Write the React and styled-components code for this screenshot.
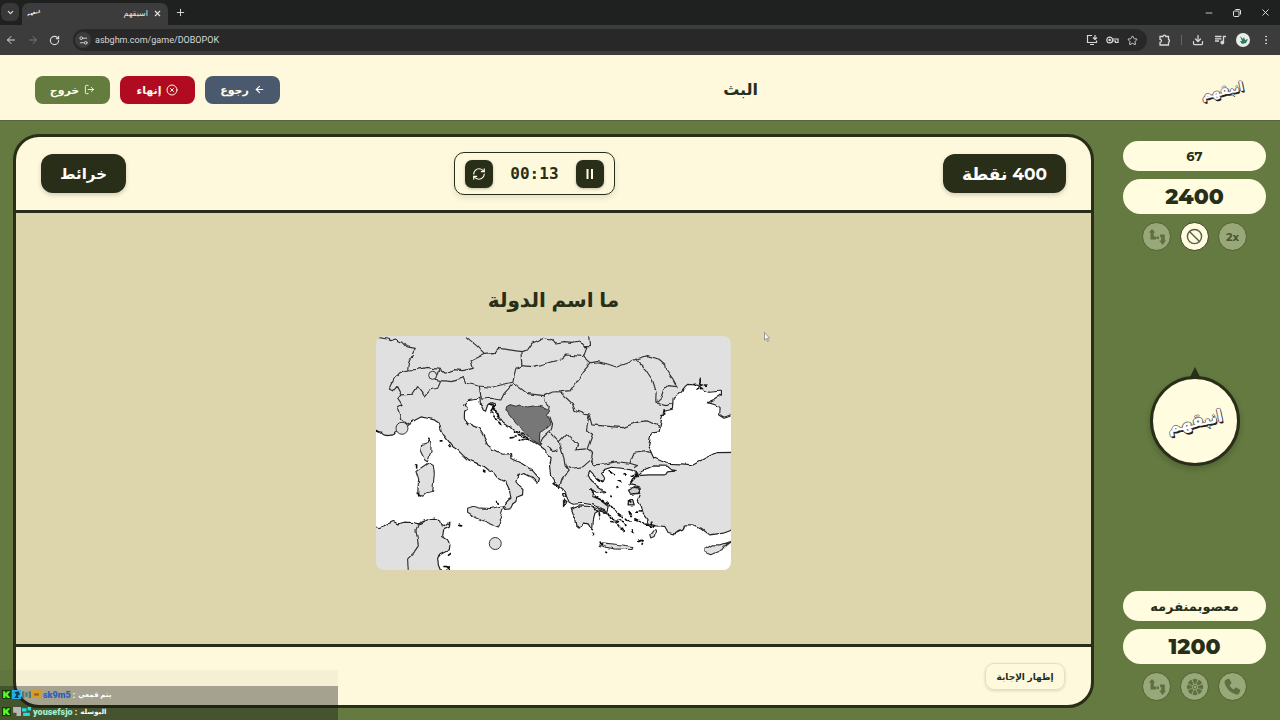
import React from 'react';
import styled, { createGlobalStyle, css } from 'styled-components';
import {
  ChevronDown, X, Plus, ArrowLeft, ArrowRight, RotateCw, Settings2, Star,
  Download, EllipsisVertical, Minus, LogOut, CircleX, RefreshCw, Ban,
} from 'lucide-react';

const ink = '#282e18';
const cream = '#fef9dc';
const green = '#647a40';
const arabic = '"Montserrat", "DejaVu Sans", sans-serif';

const GlobalStyle = createGlobalStyle`
  * { box-sizing: border-box; }
  body { margin: 0; background: ${green}; font-family: ${arabic}; color: ${ink}; }
  button, input { font: inherit; color: inherit; border: 0; padding: 0; margin: 0; background: none; }
  svg { display: block; flex: none; }
  h1, h2, p { margin: 0; }
`;

const Page = styled.div`
  min-height: 100vh;
  display: flex;
  flex-direction: column;
  position: relative;
`;

/* Browser frame */
const TabStrip = styled.div`
  height: 25px;
  flex: none;
  display: flex;
  align-items: flex-end;
  background: #1f2020;
  color: #e3e3e3;
`;
const TabSearch = styled.button`
  width: 18px;
  height: 18px;
  margin: 0 3px 4px 1px;
  display: grid;
  place-items: center;
  border-radius: 6px;
  background: #383838;
`;
const Tab = styled.div`
  width: 146px;
  height: 22px;
  padding: 0 6px 2px 5px;
  display: flex;
  align-items: center;
  gap: 5px;
  border-radius: 7px 7px 0 0;
  background: #3c3c3c;
`;
const TabTitle = styled.span`
  flex: 1;
  font-size: 8px;
  direction: rtl;
`;
const BareButton = styled.button`
  display: grid;
  place-items: center;
  cursor: pointer;
`;
const NewTab = styled(BareButton)`
  height: 25px;
  margin-left: 7px;
`;
const WindowControls = styled.div`
  height: 25px;
  margin-left: auto;
  padding-right: 9px;
  display: flex;
  align-items: center;
  gap: 18px;
`;
const Toolbar = styled.div`
  height: 30px;
  flex: none;
  padding: 0 8px 0 5px;
  display: flex;
  align-items: center;
  gap: 10px;
  background: #3c3c3c;
  color: #d8d8d8;
`;
const AddressBar = styled.label`
  flex: 1;
  height: 22px;
  margin: 0 2px 0 3px;
  padding: 0 9px 0 2px;
  display: flex;
  align-items: center;
  gap: 8px;
  border-radius: 11px;
  background: #282828;
`;
const SiteInfo = styled.span`
  width: 16px;
  height: 16px;
  display: grid;
  place-items: center;
  border-radius: 8px;
  background: #3c3c3c;
`;
const Address = styled.input`
  flex: 1;
  min-width: 0;
  margin-left: -4px;
  outline: none;
  font-family: "Roboto", sans-serif;
  font-size: 9px;
`;
const Divider = styled.span`
  width: 1px;
  height: 10px;
  background: #666;
`;
const Avatar = styled.button`
  width: 14px;
  height: 14px;
  display: grid;
  place-items: center;
  border-radius: 7px;
  background: #e8eeea;
  color: #2f7a5b;
`;

/* Site header */
const SiteHeader = styled.header`
  height: 66px;
  flex: none;
  padding: 4px 36px 0 35px;
  display: flex;
  align-items: center;
  justify-content: space-between;
  background: ${cream};
  border-bottom: 1px solid #59653b;
`;
const Actions = styled.div`
  display: flex;
  gap: 10px;
`;
const ActionButton = styled.button`
  width: 75px;
  height: 28px;
  display: flex;
  align-items: center;
  justify-content: center;
  gap: 5px;
  border-radius: 8px;
  background: ${(p) => p.$color};
  color: #fffbe6;
  font-size: 11px;
  font-weight: 700;
  cursor: pointer;
`;
const PageTitle = styled.h1`
  font-size: 16px;
  line-height: 24px;
  font-weight: 700;
`;
const Logo = styled.span`
  display: inline-block;
  font-size: ${(p) => p.$size}px;
  line-height: 24px;
  font-weight: 700;
  color: #fff;
  direction: rtl;
  transform: rotate(-12deg);
  text-shadow: ${(p) => (p.$size < 10 ? 'none' : '-1px 0 #666, 0 -1px #888, 1px 0 #444, 0 1px #222, 1px 2px #222')};
`;

/* Game area */
const Game = styled.main`
  flex: 1;
  padding: 13px 14px 12px 13px;
  display: flex;
  gap: 29px;
`;
const Board = styled.section`
  flex: 1;
  min-width: 0;
  display: flex;
  flex-direction: column;
  overflow: hidden;
  border: 3px solid ${ink};
  border-radius: 26px;
  background: ${cream};
`;
const BoardHeader = styled.div`
  height: 76px;
  padding: 0 25px;
  display: flex;
  align-items: center;
  justify-content: space-between;
  border-bottom: 3px solid ${ink};
`;
const Tag = styled.span`
  height: 39px;
  padding: 0 19px;
  display: flex;
  align-items: center;
  border-radius: 12px;
  background: ${ink};
  color: #fff;
  font-size: ${(p) => (p.$points ? 17 : 15)}px;
  font-weight: 700;
  direction: rtl;
  box-shadow: 0 2px 4px rgba(0, 0, 0, .18);
`;
const Timer = styled.div`
  height: 43px;
  padding: 0 10px;
  display: flex;
  align-items: center;
  gap: 17px;
  border: 1px solid ${ink};
  border-radius: 10px;
  box-shadow: 0 3px 6px rgba(0, 0, 0, .1);
  font-family: "DejaVu Sans Mono", monospace;
  font-size: 16px;
  font-weight: 700;
`;
const TimerButton = styled.button`
  width: 28px;
  height: 28px;
  display: grid;
  place-items: center;
  border-radius: 7px;
  background: ${ink};
  color: #fffbe6;
  box-shadow: 0 1px 3px rgba(0, 0, 0, .25);
  cursor: pointer;
`;
const Question = styled.div`
  flex: 1;
  padding-bottom: 3px;
  display: flex;
  flex-direction: column;
  align-items: center;
  justify-content: center;
  gap: 20px;
  background: #ddd6ac;
`;
const Prompt = styled.h2`
  font-size: 20px;
  line-height: 32px;
  font-weight: 700;
  direction: rtl;
`;
const MapFrame = styled.figure`
  width: 33%;
  margin: 0;
  overflow: hidden;
  border-radius: 8px;
  svg { width: 100%; height: auto; }
`;
const BoardFooter = styled.div`
  height: 61px;
  padding: 0 26px;
  display: flex;
  align-items: center;
  justify-content: flex-end;
  border-top: 3px solid ${ink};
`;
const RevealButton = styled.button`
  height: 27px;
  min-width: 80px;
  padding: 0 10px;
  border: 1px solid #e4dfc0;
  border-radius: 9px;
  font-size: 9px;
  font-weight: 700;
  box-shadow: 0 1px 3px rgba(0, 0, 0, .15);
  cursor: pointer;
`;

/* Teams */
const Teams = styled.aside`
  width: 143px;
  padding: 7px 0;
  display: flex;
  flex-direction: column;
  align-items: center;
  justify-content: space-between;
`;
const Team = styled.div`
  width: 100%;
  display: flex;
  flex-direction: column;
  gap: 8px;
`;
const Pill = styled.div`
  height: ${(p) => (p.$score ? 35 : 30)}px;
  display: grid;
  place-items: center;
  border-radius: 18px;
  background: #fffce0;
  font-size: ${(p) => (p.$score ? 22 : 13)}px;
  font-weight: ${(p) => (p.$score ? 800 : 700)};
`;
const Powers = styled.div`
  display: flex;
  justify-content: center;
  gap: 9px;
`;
const Power = styled.button`
  width: 29px;
  height: 29px;
  display: grid;
  place-items: center;
  border: 1px solid #4e6131;
  border-radius: 15px;
  background: #98a878;
  color: #5e7040;
  font-size: 11px;
  font-weight: 700;
  ${(p) => p.$active && css`
    background: #fffce0;
    border-color: #34401f;
    color: #5a5e48;
  `}
  ${(p) => p.$dark && css`color: #48562f;`}
`;
const Turn = styled.div`
  position: relative;
  width: 90px;
  height: 90px;
  display: grid;
  place-items: center;
  border: 3px solid ${ink};
  border-radius: 45px;
  background: #fffce0;
  box-shadow: 0 3px 6px rgba(0, 0, 0, .2);
`;
const Pointer = styled.svg`
  position: absolute;
  top: -12px;
  left: 36px;
`;

/* Stream chat and mouse pointer over the page */
const Chat = styled.div`
  position: absolute;
  left: 0;
  bottom: 0;
  width: 338px;
  font-family: "Roboto", "DejaVu Sans", sans-serif;
  font-size: 9px;
  font-weight: 700;
  color: #fff;
`;
const ChatLine = styled.p`
  height: ${(p) => (p.$faded ? 16 : 17)}px;
  padding-left: 2px;
  display: flex;
  align-items: center;
  gap: 1px;
  background: rgba(20, 20, 20, .38);
  ${(p) => p.$faded && css`opacity: .1;`}
`;
const Badge = styled.svg.attrs({ width: 9, height: 9, viewBox: '0 0 8 8' })``;
const ChatName = styled.b`
  margin: 0 1px;
  color: ${(p) => p.$color};
`;
const Message = styled.span`
  margin-left: 2px;
  font-size: 7px;
  direction: rtl;
`;
const MousePointer = styled.svg`
  position: absolute;
  left: 764px;
  top: 332px;
`;

const SwapIcon = () => (
  <svg width="18" height="18" viewBox="0 0 18 18" fill="currentColor">
    <path d="M4 1 7.200 4.500H5.800V8.500H8v2.900H2.500V4.500H.8zM8.500 8.500h2.400v2.400H8.500zM12 6.600h4.800v6h1.200L14.600 17l-3.400-4.400h2V9H12z" />
  </svg>
);
const spokes = [0, 45, 90, 135, 180, 225, 270, 315];
const WheelIcon = () => (
  <svg width="18" height="18" viewBox="-9 -9 18 18" fill="currentColor">
    {spokes.map((a) => (
      <path key={a} transform={`rotate(${a})`} d="M-.900 -3-2.500-7.600Q0-8.800 2.500-7.600L.900-3Q0-3.400-.900-3z" />
    ))}
    <circle r="1.800" fill="none" stroke="currentColor" strokeWidth="1" />
  </svg>
);
const PhoneIcon = () => (
  <svg width="19" height="19" viewBox="0 0 24 24" fill="currentColor">
    <path d="M6.500 2.300 3 4.200c-1 .8-1.200 2-.9 3.400C3.600 14.200 9.800 20.500 16.500 22c1.500.3 2.700 0 3.500-1l1.800-3.400c.3-.7.100-1.300-.5-1.700L17 13.500c-.6-.3-1.300-.2-1.700.3l-1.700 2.100c-2.400-1.200-4.300-3.100-5.500-5.500l2.100-1.700c.5-.4.600-1.100.4-1.700L8.200 2.900c-.3-.7-1-.9-1.700-.6z" />
  </svg>
);
const KBadge = () => (
  <Badge><rect width="8" height="8" fill="#153c08" /><path d="M1 1h2v2l2-2h2.500L5 4l2.500 3H5L3 5v2H1z" fill="#54fb24" /></Badge>
);

const EuropeMap = () => (
  <svg viewBox="0 3 1065 705" role="img" aria-label="خريطة" strokeLinejoin="round">
    <defs>
      <filter id="coast" filterUnits="userSpaceOnUse" x="-10" y="-10" width="1090" height="730">
        <feTurbulence type="fractalNoise" baseFrequency=".05" numOctaves="1" seed="4" />
        <feDisplacementMap in="SourceGraphic" scale="13" xChannelSelector="R" yChannelSelector="G" />
      </filter>
    </defs>
    <rect y="0" width="1065" height="711" fill="#e0e0e0" />
    <g filter="url(#coast)">
      <g fill="#fff" stroke="#222" strokeWidth="3.500">
        <path d="M-25 285 15 292 22 299 38 302 50 299 65 290 82 280 98 268 118 255 135 246 155 250 175 255 190 265 195 285 203 300 215 315 230 335 245 345 262 362 275 374 300 384 325 395 340 407 352 412 363 427 378 435 390 442 401 465 405 490 397 496 385 510 390 524 402 522 408 509 420 500 422 487 440 480 441 464 425 450 420 440 426 422 445 416 470 428 486 445 491 431 470 407 440 387 405 371 404 356 380 358 350 343 335 330 320 298 308 280 290 272 274 264 265 247 266 232 275 225 263 208 276 197 300 193 312 185 313 205 322 225 329 229 335 210 345 203 357 207 350 220 365 238 382 262 400 274 415 289 440 301 465 315 490 331 508 345 512 358 526 372 521 390 524 422 537 443 562 464 570 480 580 502 592 508 622 505 652 510 687 525 692 532 672 523 642 515 612 513 584 523 597 555 600 572 610 580 622 565 640 567 650 585 652 560 657 535 672 525 682 532 692 533 697 515 672 495 647 485 652 467 667 475 687 470 672 460 647 440 637 420 642 410 667 435 682 440 687 430 677 415 682 405 707 397 737 400 762 405 787 415 772 430 762 450 787 455 792 475 784 495 797 515 802 535 817 555 812 565 842 573 867 575 877 593 897 597 922 585 927 570 952 570 977 580 1002 600 1042 595 1090 578V735H205L187 690 185 670 192 660 220 645 222 630 215 615 200 605 203 585 220 577 222 562 205 575 195 571 190 555 178 550 155 553 128 567 110 563 85 562 65 567 52 560 30 570 10 578-25 572Z" />
        <path d="M852 278 858 250 865 229 890 223 892 190 907 180 928 155 935 148 965 150 985 165 1002 172 1037 168 1037 180 1015 195 997 203 1020 210 1030 218 1029 237 1045 247 1090 232V352L1022 353 987 370 952 390 917 387 872 385 837 370 827 348 818 333 824 308 832 291 850 288Z" />
        <path d="M785 422 800 407 832 393 875 394 888 405 902 408 875 411 869 420 820 420Z" />
      </g>
      <g fill="none" stroke="#333" strokeWidth="3.500">
        <path d="M10 8 33 12 45 17 58 12 78 22 90 35 118 40 108 60 98 83 95 105 72 113 55 130 40 163 52 168 62 155 75 180 110 178 125 155 145 183 160 165 185 160 195 137 177 133 190 103 153 97 125 103 95 105M75 180 65 192 78 212 65 220 75 253 98 268M190 103 205 115 235 104 260 107 292 100 285 75 325 55 305 35 270 5M325 55 360 52 370 40 435 50 455 45 468 25 485 17 500 10 522 15M195 137 230 140 263 128 270 145 310 153 345 157 375 150 410 142 415 120 420 100 438 92 435 50M438 92 470 95 505 87 522 82 552 75 570 60 619 64M522 12 540 24 565 20 590 22 610 18 625 35 644 35 642 3M633 35 622 65 642 83 665 80 695 87 722 96 755 85 780 73 815 62 850 73 870 90 872 105 890 130 904 155 875 152 863 165 855 190 841 204 870 212 892 205M780 73 810 105 830 135 841 170 840 195 841 204M642 87 622 110 600 145 585 167 558 170 530 171 505 182 455 176 410 142M310 153 315 185 318 193 345 190 375 195 385 175 410 148M505 182 508 200 520 215 517 228M552 170 572 190 590 207 597 226 625 238 640 240 648 270 742 278 785 261 815 258 852 275M640 240 635 265 632 285 650 298 634 342 640 345 650 355 645 375 655 390 690 387 722 380 762 385 775 355 810 350 831 353M522 245 530 270 522 290 550 320 572 297 605 330 600 345 630 342M550 320 560 355 568 390 590 400 622 395 645 375M568 390 580 405 558 435 550 460M520 290 500 310 490 331M128 567 120 585 127 630 115 655 95 675 97 708" />
        <path d="M762 385 785 392 772 400M545 345 532 350 515 330" />
      </g>
      <path d="M392 215 403 209 420 214 432 210 455 216 480 212 500 216 520 225 512 238 520 250 526 268 510 283 492 295 490 328 465 310 440 285 417 262 400 240 390 225Z" fill="#777" stroke="#333" strokeWidth="3" />
      <g fill="#e0e0e0" stroke="#333" strokeWidth="3.500">
        <path d="M160 308 165 325 165 350 155 378 144 370 132 345 134 330 157 322Z" />
        <path d="M120 410 155 385 172 395 175 415 170 470 155 473 140 484 125 477 128 435Z" />
        <path d="M275 520 292 514 315 520 345 521 385 511 370 555 375 565 367 576 340 565 300 548 275 532Z" />
        <path d="M670 632 680 624 725 629 771 635 767 644 712 642Z" />
        <path d="M987 643 1010 630 1035 630 1065 620 1046 634 1038 645 1005 660 988 652Z" />
        <path d="M822 600 831 588 841 588 835 605 825 609Z" />
      </g>
      <g fill="#ccc" stroke="#222" strokeWidth="4">
        <path d="M758 466 775 457 793 460 788 475 765 478ZM758 498 770 492 775 510 757 510ZM560 477 569 475 570 486 563 487ZM563 495 570 500 563 515Z" />
      </g>
      <g fill="none" stroke="#111" strokeWidth="5" strokeLinecap="round" strokeDasharray="9 6 3 7">
        <path d="M340 207 355 212 344 230 355 245 370 260 375 267M350 215 365 235 370 250M403 306 428 302 450 310 465 318M413 290 445 296 455 312 430 316" />
        <path d="M692 500 707 515 725 535 740 545M705 560 720 562 730 575 745 588M727 552 745 562 752 580M777 555 790 560 817 570 835 560M780 532 800 531M808 565 825 575 840 572M770 585 775 595M642 465 660 486 685 500M655 485 677 498 697 510M650 520 670 532 672 550M700 410 717 420M765 425 785 415 772 437 762 450M727 438 740 444M745 417 752 425M665 430 680 440M532 443 542 450 550 460" />
        <path d="M695 535 705 550M760 530 765 545M740 580 743 590M710 550 727 562M752 550 763 562M705 483 709 488M724 458 726 460M758 495 766 502M789 620 802 615 799 628M673 622 677 630M690 652 692 653" />
        <path d="M0 287 14 294M190 318 198 318M216 332 222 335M162 307 162 318M272 267 273 269M323 406 327 408M362 500 364 505M250 571 257 573M122 390 122 402M124 474 126 480M178 551 190 555M218 661 230 652M204 695 220 696 218 708 207 704M215 697 223 708M650 595 653 598" />
        <path d="M973 130V145M958 148 992 151M972 142 974 165M960 165 978 160M865 225 867 240 856 242" />
      </g>
    </g>
    <g fill="#e0e0e0" stroke="#333" strokeWidth="3">
      <circle cx="170" cy="121" r="12" />
      <circle cx="78" cy="280" r="18" />
      <circle cx="358" cy="626" r="18" />
    </g>
  </svg>
);

function TeamPanel({ name, score, children }) {
  return (
    <Team>
      <Pill>{name}</Pill>
      <Pill $score>{score}</Pill>
      <Powers>{children}</Powers>
    </Team>
  );
}

export default function App() {
  return (
    <Page>
      <GlobalStyle />
      <TabStrip>
        <TabSearch aria-label="Search tabs"><ChevronDown size={9} strokeWidth={3} /></TabSearch>
        <Tab>
          <Logo $size={4}>انبقهم</Logo>
          <TabTitle>اسبقهم</TabTitle>
          <BareButton aria-label="Close tab"><X size={9} strokeWidth={3} /></BareButton>
        </Tab>
        <NewTab aria-label="New tab"><Plus size={11} /></NewTab>
        <WindowControls>
          <BareButton aria-label="Minimize"><Minus size={10} /></BareButton>
          <BareButton aria-label="Restore">
            <svg width="10" height="10" viewBox="0 0 10 10" fill="none" stroke="currentColor">
              <rect x="1.500" y="3" width="5.500" height="5.500" rx="1" />
              <path d="M3.500 1.500H7a1.500 1.500 0 0 1 1.500 1.500v3.500" />
            </svg>
          </BareButton>
          <BareButton aria-label="Close"><X size={11} /></BareButton>
        </WindowControls>
      </TabStrip>
      <Toolbar>
        <BareButton aria-label="Back"><ArrowLeft size={12} /></BareButton>
        <BareButton aria-label="Forward" disabled><ArrowRight size={12} color="#777" /></BareButton>
        <BareButton aria-label="Reload"><RotateCw size={11} strokeWidth={2.5} /></BareButton>
        <AddressBar>
          <SiteInfo><Settings2 size={11} /></SiteInfo>
          <Address aria-label="Address" defaultValue="asbghm.com/game/DOBOPOK" />
          <svg width="12" height="12" viewBox="0 0 12 12" fill="none" stroke="currentColor" strokeWidth="1.200">
            <path d="M6 1.500H1.500v7h9V6.500M4 10.500h4M9 1v4M7 3.500l2 2 2-2" />
          </svg>
          <svg width="13" height="12" viewBox="0 0 13 12" fill="none" stroke="currentColor" strokeWidth="1.200">
            <circle cx="3.700" cy="6" r="2.900" /><circle cx="3.700" cy="6" r=".7" />
            <path d="M6.500 5H12v3.500H9.500V7H6.500" />
          </svg>
          <Star size={11} />
        </AddressBar>
        <BareButton aria-label="Extensions">
          <svg width="12" height="12" viewBox="0 0 12 12" fill="none" stroke="currentColor" strokeWidth="1.300">
            <path d="M1 2.500h3a1.400 1.400 0 0 1 2.800 0H9.500v3a1.400 1.400 0 0 1 0 2.700V11H1V8.300a1.500 1.500 0 0 0 0-3z" />
          </svg>
        </BareButton>
        <Divider />
        <BareButton aria-label="Downloads"><Download size={12} strokeWidth={2.5} /></BareButton>
        <BareButton aria-label="Media">
          <svg width="12" height="12" viewBox="0 0 12 12" fill="none" stroke="currentColor" strokeWidth="1.300">
            <path d="M1 2.500h6.500M1 4.800h6.500M1 7h4M9.500 8.500v-6H12" /><circle cx="8.300" cy="8.500" r="1.300" fill="currentColor" />
          </svg>
        </BareButton>
        <Avatar aria-label="Profile">
          <svg width="9" height="8" viewBox="0 0 9 8" fill="currentColor"><path d="M1 0 4 3 5 1 6 4 9 3 7 7 3 8 1 5 3 5z" /></svg>
        </Avatar>
        <BareButton aria-label="Menu"><EllipsisVertical size={12} /></BareButton>
      </Toolbar>

      <SiteHeader>
        <Actions>
          <ActionButton $color="#647c3e">خروج<LogOut size={11} /></ActionButton>
          <ActionButton $color="#b00b20">إنهاء<CircleX size={12} /></ActionButton>
          <ActionButton $color="#4a596e">رجوع<ArrowLeft size={11} strokeWidth={2.5} /></ActionButton>
        </Actions>
        <PageTitle>البث</PageTitle>
        <Logo $size={13}>انبقهم</Logo>
      </SiteHeader>

      <Game>
        <Board>
          <BoardHeader>
            <Tag>خرائط</Tag>
            <Timer>
              <TimerButton aria-label="إعادة"><RefreshCw size={14} /></TimerButton>
              <time>00:13</time>
              <TimerButton aria-label="إيقاف">
                <svg width="8" height="10" viewBox="0 0 8 10" fill="currentColor"><path d="M.500 0h2v10h-2zM5 0h2v10H5z" /></svg>
              </TimerButton>
            </Timer>
            <Tag $points>400 نقطة</Tag>
          </BoardHeader>
          <Question>
            <Prompt>ما اسم الدولة</Prompt>
            <MapFrame><EuropeMap /></MapFrame>
          </Question>
          <BoardFooter>
            <RevealButton>إظهار الإجابة</RevealButton>
          </BoardFooter>
        </Board>
        <Teams>
          <TeamPanel name="67" score="2400">
            <Power aria-label="تبديل"><SwapIcon /></Power>
            <Power $active aria-label="منع"><Ban size={17} strokeWidth={2} /></Power>
            <Power $dark>2x</Power>
          </TeamPanel>
          <Turn>
            <Pointer width="12" height="10" viewBox="0 0 12 10"><path d="M6 0 11 10H1z" fill={ink} /></Pointer>
            <Logo $size={17}>انبقهم</Logo>
          </Turn>
          <TeamPanel name="معصوبمنفرمه" score="1200">
            <Power aria-label="تبديل"><SwapIcon /></Power>
            <Power aria-label="عجلة"><WheelIcon /></Power>
            <Power aria-label="اتصال"><PhoneIcon /></Power>
          </TeamPanel>
        </Teams>
      </Game>

      <Chat>
        <ChatLine $faded />
        <ChatLine>
          <KBadge />
          <Badge><rect width="8" height="8" fill="#23aee8" /><path d="m2 7 2-3-2-2 4-1 1 3-2 1 1 2" fill="#123b58" /></Badge>
          <Badge><path d="M0 1h2v6H0zM3 2h2v4H3zM6 1h2v6H6z" fill="#527775" /></Badge>
          <Badge><rect width="8" height="7" rx="1" fill="#d89b25" /><path d="M2 3h4v2H2z" fill="#87602b" /></Badge>
          <ChatName $color="#2860bd">sk9m5</ChatName>:
          <Message>يتم قمعي</Message>
        </ChatLine>
        <ChatLine>
          <KBadge />
          <Badge><path d="M1 0h7v8H4V5H1z" fill="#b9b6b6" /></Badge>
          <Badge><path d="M0 1h4v3H0zM5 0h3v3H5zM1 5h6v3H1z" fill="#20dfe0" /></Badge>
          <ChatName $color="#a0efd0">yousefsjo</ChatName>:
          <Message>البوسله</Message>
        </ChatLine>
      </Chat>
      <MousePointer width="6" height="10" viewBox="0 0 6 10">
        <path d="M.500.500v7.500l1.700-1.500 1.300 3 1-.5-1.200-2.800H5.500z" fill="#fff" stroke="#666" strokeWidth=".6" />
      </MousePointer>
    </Page>
  );
}
